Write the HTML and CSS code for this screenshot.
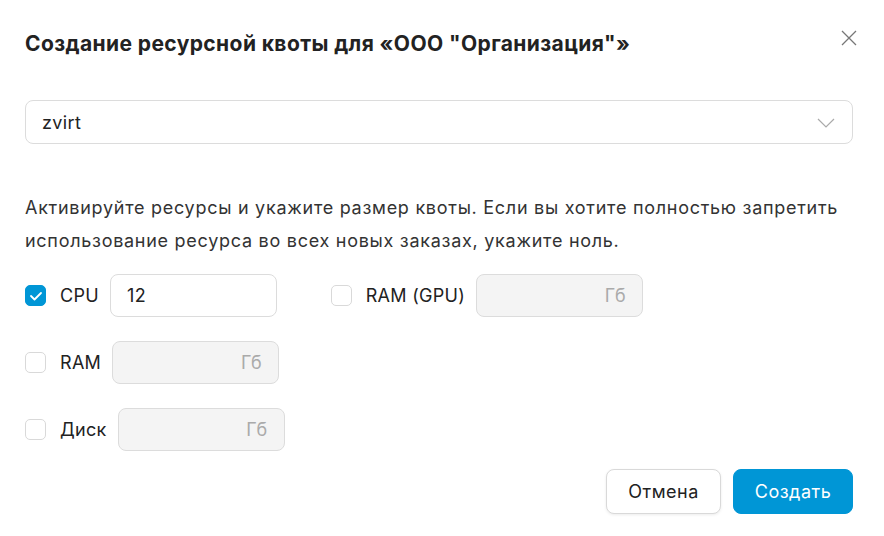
FILE: index.html
```html
<!DOCTYPE html>
<html lang="ru">
<head>
<meta charset="utf-8">
<link rel="stylesheet" href="styles.css">
</head>
<body>
<div class="modal">
  <div class="header">
    <h1 class="title">Создание ресурсной квоты для «ООО "Организация"»</h1>
    <button class="close" aria-label="Закрыть">
      <svg width="16" height="16" viewBox="0 0 16 16"><path d="M1 1L15 15M15 1L1 15" stroke="#777" stroke-width="1.3" fill="none"/></svg>
    </button>
  </div>
  <div class="select">
    <span class="select-value">zvirt</span>
    <svg class="chevron" width="18" height="10" viewBox="0 0 18 10"><path d="M1 1L9 9L17 1" stroke="#aaa" stroke-width="1.2" fill="none"/></svg>
  </div>
  <p class="hint">Активируйте ресурсы и укажите размер квоты. Если вы хотите полностью запретить использование ресурса во всех новых заказах, укажите ноль.</p>
  <div class="fields">
    <div class="col">
      <div class="row">
        <span class="check checked"><svg width="14" height="10" viewBox="0 0 14 10"><path d="M2 5L5.5 8.5L12 2" stroke="#fff" stroke-width="1.8" fill="none" stroke-linecap="round" stroke-linejoin="round"/></svg></span>
        <span class="label">CPU</span>
        <div class="input"><span class="val">12</span></div>
      </div>
      <div class="row">
        <span class="check"></span>
        <span class="label">RAM</span>
        <div class="input disabled"><span class="unit">Гб</span></div>
      </div>
      <div class="row">
        <span class="check"></span>
        <span class="label">Диск</span>
        <div class="input disabled"><span class="unit">Гб</span></div>
      </div>
    </div>
    <div class="col col2">
      <div class="row">
        <span class="check"></span>
        <span class="label">RAM (GPU)</span>
        <div class="input disabled"><span class="unit">Гб</span></div>
      </div>
    </div>
  </div>
  <div class="footer">
    <button class="btn btn-secondary">Отмена</button>
    <button class="btn btn-primary">Создать</button>
  </div>
</div>
</body>
</html>
```
FILE: styles.css
```css
* { box-sizing: border-box; }
html, body { margin: 0; padding: 0; background: #fff; }
body {
  font-family: Inter, "Noto Sans", sans-serif;
  color: #222;
  width: 884px;
  height: 536px;
  overflow: hidden;
}
.modal {
  padding: 27px 31px 0 25px;
}
.header {
  display: flex;
  justify-content: space-between;
  align-items: flex-start;
  height: 73px;
}
.title {
  margin: 4px 0 0 0;
  font-size: 21px;
  font-weight: 700;
  line-height: 26px;
  color: #222;
  letter-spacing: 0.4px;
}
.close {
  border: 0;
  background: none;
  padding: 0;
  margin: 3px -4px 0 0;
  width: 16px;
  height: 16px;
  display: flex;
}
.select {
  height: 44px;
  border: 1px solid #dcdcdc;
  border-radius: 8px;
  display: flex;
  align-items: center;
  justify-content: space-between;
  padding: 0 17px 0 16px;
}
.select-value { font-size: 18px; color: #222; letter-spacing: 0.4px; }
.chevron { margin-top: 1px; }
.hint {
  margin: 47px 0 0 0;
  font-size: 18px;
  line-height: 33px;
  color: #333;
  letter-spacing: 0.72px;
}
.fields {
  display: flex;
  margin-top: 17px;
}
.col { display: flex; flex-direction: column; gap: 24px; }
.col2 { margin-left: 46px; }
.row {
  display: flex;
  align-items: center;
  height: 43px;
}
.check {
  width: 21px;
  height: 21px;
  border: 1px solid #d9d9d9;
  border-radius: 5px;
  background: #fff;
  display: flex;
  align-items: center;
  justify-content: center;
  flex: none;
}
.check.checked { background: #0096d6; border-color: #0096d6; }
.label {
  margin-left: 14px;
  margin-right: 11px;
  font-size: 18px;
  color: #222;
  letter-spacing: 0.3px;
}
.input {
  width: 167px;
  height: 43px;
  border: 1px solid #dcdcdc;
  border-radius: 8px;
  display: flex;
  align-items: center;
  padding: 0 16px;
  background: #fff;
}
.input.disabled {
  background: #f4f4f4;
  justify-content: flex-end;
}
.val { font-size: 18px; color: #222; letter-spacing: 0.4px; }
.unit { font-size: 18px; color: #aaa; letter-spacing: 0.4px; }
.footer {
  display: flex;
  justify-content: flex-end;
  gap: 12px;
  margin-top: 18px;
}
.btn {
  height: 45px;
  border-radius: 8px;
  font-family: inherit;
  font-size: 18px;
  letter-spacing: 0.5px;
  padding: 0;
  cursor: pointer;
}
.btn-secondary {
  background: #fff;
  border: 1px solid #d9d9d9;
  color: #222;
  box-shadow: 0 1px 3px rgba(0,0,0,0.08);
  width: 115px;
}
.btn-primary {
  background: #0096d6;
  border: 1px solid #0096d6;
  color: #fff;
  width: 120px;
}
```
